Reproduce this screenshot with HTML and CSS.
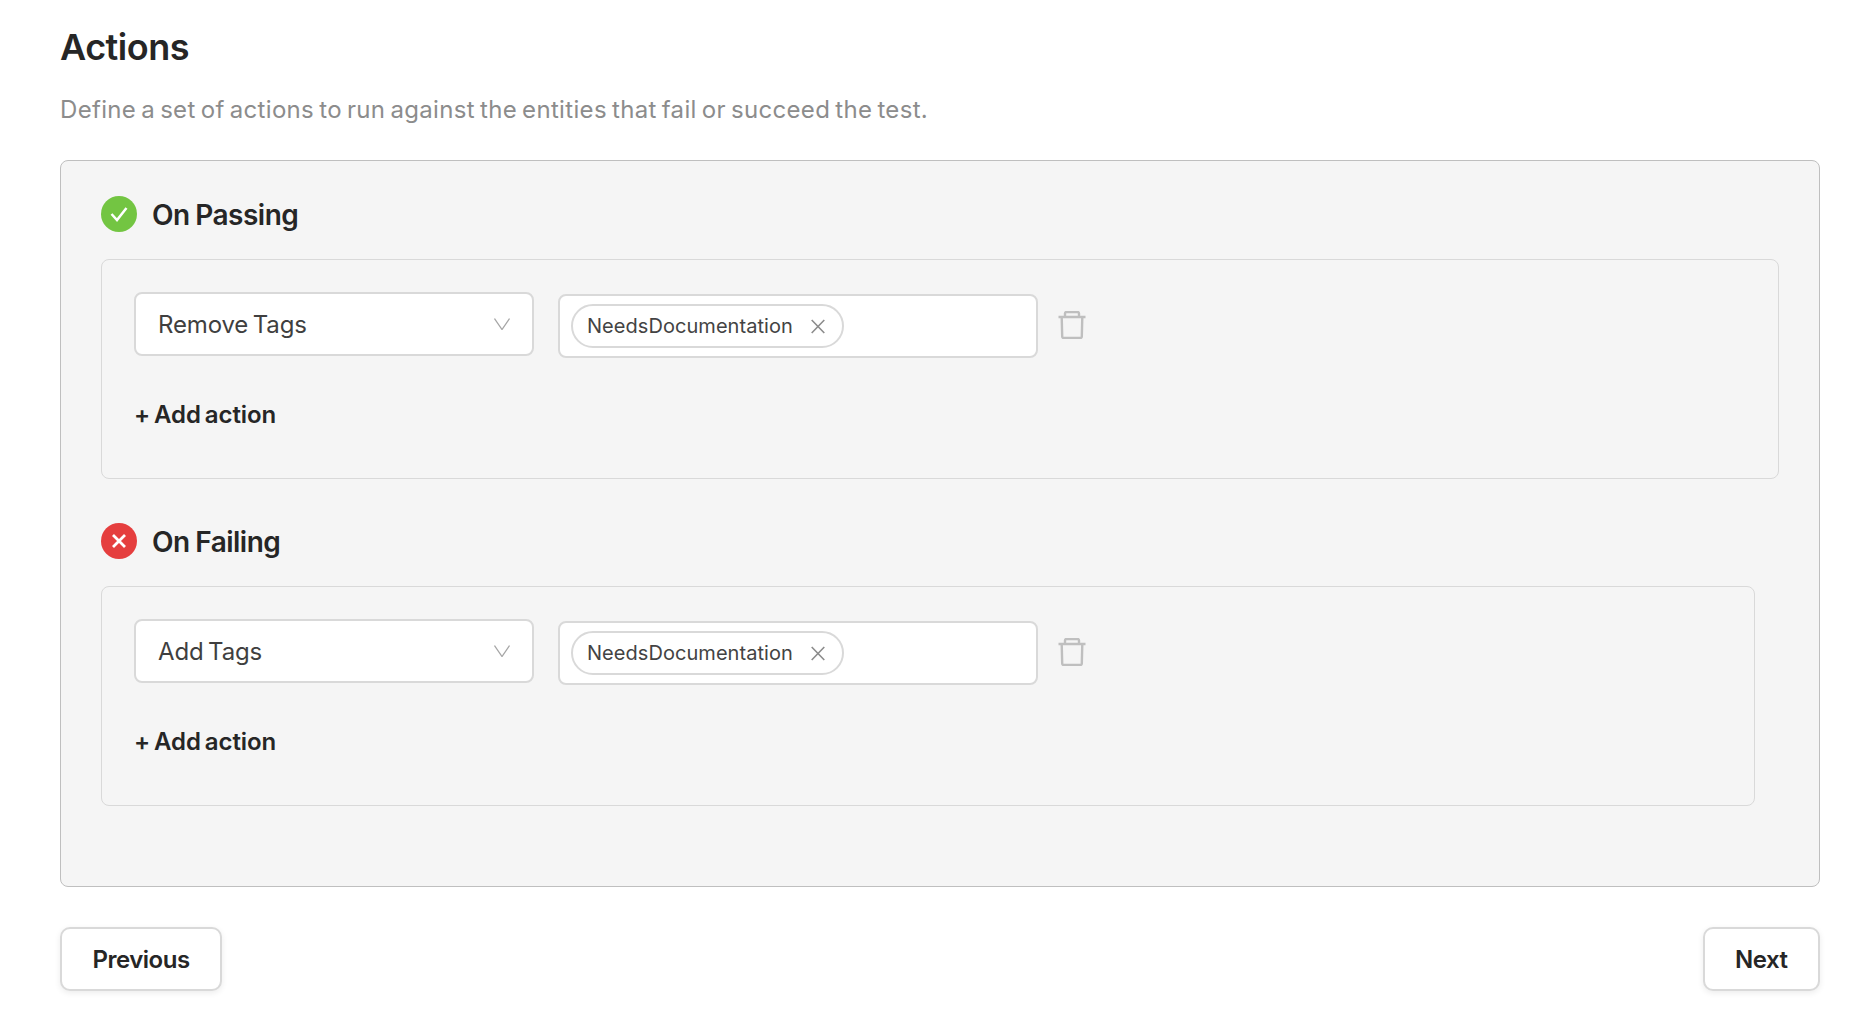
FILE: index.html
```html
<!DOCTYPE html>
<html lang="en">
<head>
<meta charset="utf-8">
<title>Actions</title>
<link rel="stylesheet" href="styles.css">
</head>
<body>
<main class="page">
  <h1 class="title">Actions</h1>
  <p class="desc">Define a set of actions to run against the entities that fail or succeed the test.</p>
  <section class="panel">
    <div class="section-head">
      <svg class="status" viewBox="0 0 36 36"><circle cx="18" cy="18" r="18" fill="#73c542"/><path d="M10.500 18l5.500 6 9.500-12" fill="none" stroke="#fff" stroke-width="2.500"/></svg>
      <h2 class="section-title">On Passing</h2>
    </div>
    <div class="card">
      <div class="row">
        <div class="select"><span>Remove Tags</span>
          <svg class="chevron" viewBox="0 0 16 12"><path d="M.5.5L8 11.5 15.5.5" fill="none" stroke="#a6a6a6" stroke-width="1.3"/></svg>
        </div>
        <div class="tags">
          <span class="chip">NeedsDocumentation
            <svg class="chip-x" viewBox="0 0 14 14"><path d="M.7.5l12.600 13M13.300 .5L.7 13.500" fill="none" stroke="#8c8c8c" stroke-width="1.600"/></svg>
          </span>
        </div>
        <svg class="trash" viewBox="0 0 28 28"><path d="M.5 6h27M7 6V2.500A1.500 1.500 0 0 1 8.500 1h11A1.500 1.500 0 0 1 21 2.500V6M3.700 6l.5 19.500a1.500 1.500 0 0 0 1.500 1.500h16.600a1.500 1.500 0 0 0 1.500-1.500l.5-19.500" fill="none" stroke="#bfbfbf" stroke-width="2.400"/></svg>
      </div>
      <div class="add">+ Add action</div>
    </div>
    <div class="section-head failing">
      <svg class="status" viewBox="0 0 36 36"><circle cx="18" cy="18" r="18" fill="#e53e3e"/><path d="M12 12l12 12M24 12L12 24" fill="none" stroke="#fff" stroke-width="2.800"/></svg>
      <h2 class="section-title">On Failing</h2>
    </div>
    <div class="card narrow">
      <div class="row">
        <div class="select"><span>Add Tags</span>
          <svg class="chevron" viewBox="0 0 16 12"><path d="M.5.5L8 11.5 15.5.5" fill="none" stroke="#a6a6a6" stroke-width="1.3"/></svg>
        </div>
        <div class="tags">
          <span class="chip">NeedsDocumentation
            <svg class="chip-x" viewBox="0 0 14 14"><path d="M.7.5l12.600 13M13.300 .5L.7 13.500" fill="none" stroke="#8c8c8c" stroke-width="1.600"/></svg>
          </span>
        </div>
        <svg class="trash" viewBox="0 0 28 28"><path d="M.5 6h27M7 6V2.500A1.500 1.500 0 0 1 8.500 1h11A1.500 1.500 0 0 1 21 2.500V6M3.700 6l.5 19.500a1.500 1.500 0 0 0 1.500 1.500h16.600a1.500 1.500 0 0 0 1.500-1.500l.5-19.500" fill="none" stroke="#bfbfbf" stroke-width="2.400"/></svg>
      </div>
      <div class="add">+ Add action</div>
    </div>
  </section>
  <div class="footer">
    <button class="btn" type="button">Previous</button>
    <button class="btn" type="button">Next</button>
  </div>
</main>
</body>
</html>
```

FILE: styles.css
```css
* { box-sizing: border-box; }
html, body { margin: 0; height: 100%; background: #fff; }
body { font-family: Inter, "Liberation Sans", sans-serif; color: #262626; overflow: hidden; }
.page { padding: 25px 50px 0 60px; }
.title { margin: 0; font-size: 36px; line-height: 44px; font-weight: 600; letter-spacing: -0.5px; color: #262626; }
.desc { margin: 26px 0 0; font-size: 24px; line-height: 30px; font-weight: 400; letter-spacing: 0.33px; word-spacing: -2px; color: #8c8c8c; }
.panel { margin-top: 35px; height: 727px; padding: 35px 40px 0; background: #f5f5f5; border: 1px solid #bfbfbf; border-radius: 8px; }
.section-head { display: flex; align-items: center; gap: 15px; height: 36px; margin-bottom: 27px; }
.section-head.failing { margin-top: 44px; }
.status { width: 36px; height: 36px; flex: none; }
.section-title { margin: 0; padding-top: 2px; font-size: 28px; line-height: 36px; font-weight: 600; letter-spacing: -0.5px; word-spacing: -1px; color: #262626; }
.card { height: 220px; padding: 32px 27px 0 32px; border: 1px solid #d9d9d9; border-radius: 8px; }
.card.narrow { margin-right: 24px; }
.row { display: flex; align-items: flex-start; }
.select { width: 400px; height: 64px; flex: none; display: flex; align-items: center; justify-content: space-between; padding: 0 22px 0 22px; background: #fff; border: 2px solid #d9d9d9; border-radius: 8px; font-size: 24px; letter-spacing: -0.15px; word-spacing: -2px; color: #3f3f3f; }
.chevron { width: 16px; height: 12px; }
.tags { width: 480px; height: 64px; flex: none; margin: 2px 0 0 24px; display: flex; align-items: center; padding: 0 11px; background: #fff; border: 2px solid #d9d9d9; border-radius: 8px; }
.chip { display: flex; align-items: center; justify-content: space-between; width: 273px; height: 44px; padding: 0 17px 0 14px; border: 2px solid #d9d9d9; border-radius: 22px; font-size: 20px; letter-spacing: 0.05px; color: #434343; background: #fff; }
.chip-x { width: 14px; height: 15px; }
.trash { width: 28px; height: 28px; flex: none; margin: 19px 0 0 20px; }
.add { margin-top: 42px; font-size: 24px; line-height: 30px; font-weight: 600; letter-spacing: -0.08px; word-spacing: -2px; color: #262626; }
.footer { display: flex; justify-content: space-between; margin-top: 40px; }
.btn { height: 64px; padding: 0 30.500px; background: #fff; border: 2px solid #d9d9d9; border-radius: 10px; font: 600 24px Inter, "Liberation Sans", sans-serif; letter-spacing: -0.5px; color: #262626; box-shadow: 0 2px 6px rgba(0, 0, 0, .08); }
```
